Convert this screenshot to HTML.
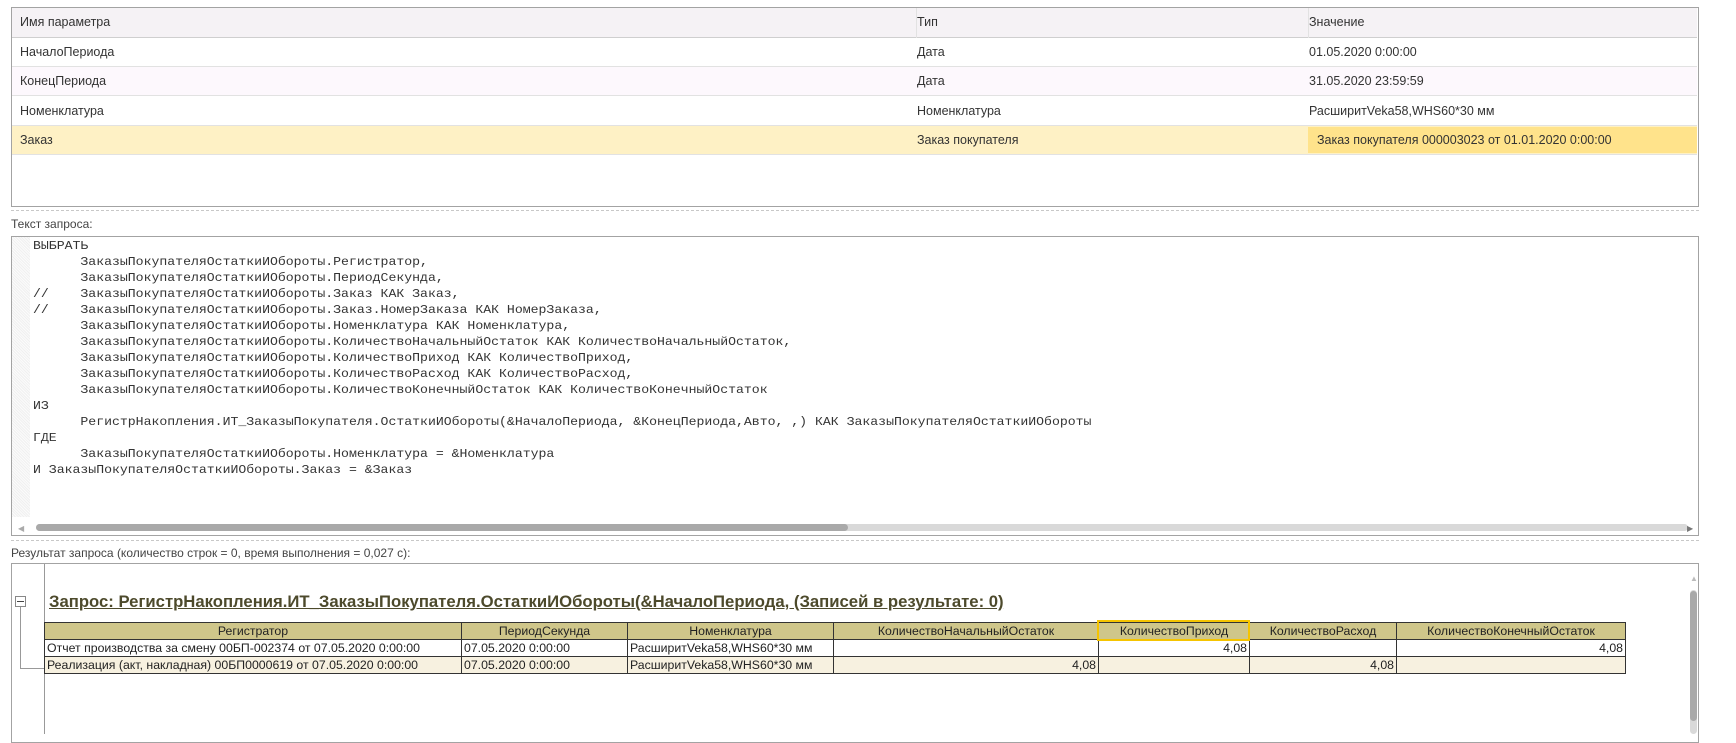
<!DOCTYPE html>
<html><head><meta charset="utf-8">
<style>
*{margin:0;padding:0;box-sizing:border-box}
body{width:1736px;height:734px;background:#fff;position:relative;overflow:hidden;font-family:"Liberation Sans",Arial,sans-serif;font-size:12.5px;color:#333}
.a{position:absolute}
.row{position:absolute;left:12px;width:1685px;border-bottom:1px solid #e2e2e2}
.row span{position:absolute;top:0;white-space:nowrap}
.dash{position:absolute;left:11px;width:1688px;border-top:1px dashed #c8c8c8}
.code{position:absolute;left:33px;top:236px;font-family:"Liberation Mono","DejaVu Sans Mono",monospace;font-size:12.2px;line-height:16px;color:#333;white-space:pre;transform:scaleX(1.08);transform-origin:0 0}
table.r{position:absolute;left:44px;top:622px;border-collapse:collapse;font-size:12.3px;color:#222;table-layout:fixed}
table.r td{border:1px solid #333;height:17px;padding:0 2px;white-space:nowrap;overflow:hidden;line-height:15px}
table.r tr.h td{background:#cfc68a;text-align:center}
table.r tr.z td{background:#f7f1e0}
.n{text-align:right}
</style></head><body>
<div class="a" style="left:11px;top:7px;width:1688px;height:200px;border:1px solid #a3a3a3"></div>
<div class="row" style="top:8px;height:30px;background:#f5f2f5;border-bottom:1px solid #cfcfcf;line-height:29px">
<span style="left:8px">Имя параметра</span><span style="left:905px">Тип</span><span style="left:1297px">Значение</span></div>
<div class="a" style="left:916px;top:8px;width:1px;height:30px;background:#e2e2e2"></div>
<div class="a" style="left:1308px;top:8px;width:1px;height:30px;background:#e2e2e2"></div>
<div class="row" style="top:38px;height:29px;line-height:29px"><span style="left:8px">НачалоПериода</span><span style="left:905px">Дата</span><span style="left:1297px">01.05.2020 0:00:00</span></div>
<div class="row" style="top:67px;height:29px;line-height:29px;background:#fdf8fd"><span style="left:8px">КонецПериода</span><span style="left:905px">Дата</span><span style="left:1297px">31.05.2020 23:59:59</span></div>
<div class="row" style="top:96px;height:30px;line-height:30px"><span style="left:8px">Номенклатура</span><span style="left:905px">Номенклатура</span><span style="left:1297px">РасширитVeka58,WHS60*30 мм</span></div>
<div class="row" style="top:126px;height:29px;line-height:28px;background:#fef1c5"><span style="left:8px">Заказ</span><span style="left:905px">Заказ покупателя</span></div>
<div class="a" style="left:1308px;top:127px;width:389px;height:26px;background:#ffe38b;line-height:26px;padding-left:9px">Заказ покупателя 000003023 от 01.01.2020 0:00:00</div>
<div class="dash" style="top:210px"></div>
<div class="a" style="left:11px;top:217px;font-size:12px;color:#444">Текст запроса:</div>
<div class="a" style="left:11px;top:236px;width:1688px;height:300px;border:1px solid #a3a3a3;overflow:hidden">
<div class="a" style="left:0;top:0;width:18px;height:280px;background:repeating-linear-gradient(45deg,#f0f0f0 0 1px,#fbfbfb 1px 2px)"></div>
</div>
<div class="code" style="top:238px">ВЫБРАТЬ
      ЗаказыПокупателяОстаткиИОбороты.Регистратор,
      ЗаказыПокупателяОстаткиИОбороты.ПериодСекунда,
//    ЗаказыПокупателяОстаткиИОбороты.Заказ КАК Заказ,
//    ЗаказыПокупателяОстаткиИОбороты.Заказ.НомерЗаказа КАК НомерЗаказа,
      ЗаказыПокупателяОстаткиИОбороты.Номенклатура КАК Номенклатура,
      ЗаказыПокупателяОстаткиИОбороты.КоличествоНачальныйОстаток КАК КоличествоНачальныйОстаток,
      ЗаказыПокупателяОстаткиИОбороты.КоличествоПриход КАК КоличествоПриход,
      ЗаказыПокупателяОстаткиИОбороты.КоличествоРасход КАК КоличествоРасход,
      ЗаказыПокупателяОстаткиИОбороты.КоличествоКонечныйОстаток КАК КоличествоКонечныйОстаток
ИЗ
      РегистрНакопления.ИТ_ЗаказыПокупателя.ОстаткиИОбороты(&amp;НачалоПериода, &amp;КонецПериода,Авто, ,) КАК ЗаказыПокупателяОстаткиИОбороты
ГДЕ
      ЗаказыПокупателяОстаткиИОбороты.Номенклатура = &amp;Номенклатура
И ЗаказыПокупателяОстаткиИОбороты.Заказ = &amp;Заказ</div>
<div class="a" style="left:18px;top:524px;font-size:8px;color:#aaa">◀</div>
<div class="a" style="left:36px;top:524px;width:1652px;height:7px;border-radius:4px;background:#d9d9d9"></div>
<div class="a" style="left:36px;top:524px;width:812px;height:7px;border-radius:4px;background:#a9a9a9"></div>
<div class="a" style="left:1687px;top:524px;font-size:8px;color:#777">▶</div>
<div class="dash" style="top:540px"></div>
<div class="a" style="left:11px;top:546px;font-size:12px;color:#444">Результат запроса (количество строк = 0, время выполнения = 0,027 с):</div>
<div class="a" style="left:11px;top:563px;width:1688px;height:180px;border:1px solid #a3a3a3"></div>
<div class="a" style="left:44px;top:564px;width:1px;height:170px;background:#999"></div>
<div class="a" style="left:15px;top:596px;width:11px;height:11px;border:1px solid #888;background:#fff"></div>
<div class="a" style="left:17px;top:601px;width:7px;height:1px;background:#444"></div>
<div class="a" style="left:20px;top:607px;width:1px;height:61px;background:#999"></div>
<div class="a" style="left:20px;top:668px;width:24px;height:1px;background:#999"></div>
<div class="a" style="left:49px;top:592px;font-size:16.7px;font-weight:bold;color:#4d4a2c;text-decoration:underline;white-space:nowrap">Запрос: РегистрНакопления.ИТ_ЗаказыПокупателя.ОстаткиИОбороты(&amp;НачалоПериода, (Записей в результате: 0)</div>
<table class="r">
<colgroup><col style="width:417px"><col style="width:166px"><col style="width:206px"><col style="width:265px"><col style="width:151px"><col style="width:147px"><col style="width:229px"></colgroup>
<tr class="h"><td>Регистратор</td><td>ПериодСекунда</td><td>Номенклатура</td><td>КоличествоНачальныйОстаток</td><td>КоличествоПриход</td><td>КоличествоРасход</td><td>КоличествоКонечныйОстаток</td></tr>
<tr><td>Отчет производства за смену 00БП-002374 от 07.05.2020 0:00:00</td><td>07.05.2020 0:00:00</td><td>РасширитVeka58,WHS60*30 мм</td><td></td><td class="n">4,08</td><td></td><td class="n">4,08</td></tr>
<tr class="z"><td>Реализация (акт, накладная) 00БП0000619 от 07.05.2020 0:00:00</td><td>07.05.2020 0:00:00</td><td>РасширитVeka58,WHS60*30 мм</td><td class="n">4,08</td><td></td><td class="n">4,08</td><td></td></tr>
</table>
<div class="a" style="left:1097px;top:620px;width:153px;height:21px;border:2px solid #f5c400"></div>
<div class="a" style="left:1690px;top:574px;font-size:8px;color:#bbb">▲</div>
<div class="a" style="left:1690px;top:590px;width:7px;height:144px;background:#d9d9d9;border-radius:4px"></div>
<div class="a" style="left:1690px;top:591px;width:7px;height:130px;background:#a9a9a9;border-radius:4px"></div>
</body></html>
